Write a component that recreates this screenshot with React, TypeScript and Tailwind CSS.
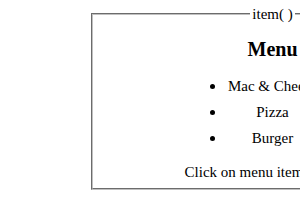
import React from "react";

const items = ["Mac & Cheese", "Pizza", "Burger"];

export default function App() {
  return (
    <div
      className="w-[300px] h-[210px] overflow-hidden bg-white text-black"
      style={{ fontFamily: '"Liberation Serif", "Times New Roman", serif' }}
    >
      <div className="w-[600px] pt-[6px]">
        <fieldset className="ml-[91px] w-[363px] border-[2px] [border-style:groove] border-[#c0c0c0] px-[12px] pb-[7px] text-center">
          <legend className="mx-auto px-[2px] text-[15px] leading-[16px]">item( )</legend>
          <h2 className="mt-[15px] text-[20px] font-bold leading-[24px]">Menu</h2>
          <ul className="mx-auto mt-[12px] w-[130px]">
            {items.map((it) => (
              <li key={it} className="flex items-center pr-[12px] text-[15px] leading-[26px]">
                <span className="flex w-[12px] pl-[2px]">
                  <span className="block h-[5px] w-[5px] rounded-full bg-black" />
                </span>
                <span className="flex-1 whitespace-nowrap text-center">{it}</span>
              </li>
            ))}
          </ul>
          <p className="mt-[12px] whitespace-nowrap text-[15px] leading-[18px]">Click on menu item to select.</p>
        </fieldset>
      </div>
    </div>
  );
}
